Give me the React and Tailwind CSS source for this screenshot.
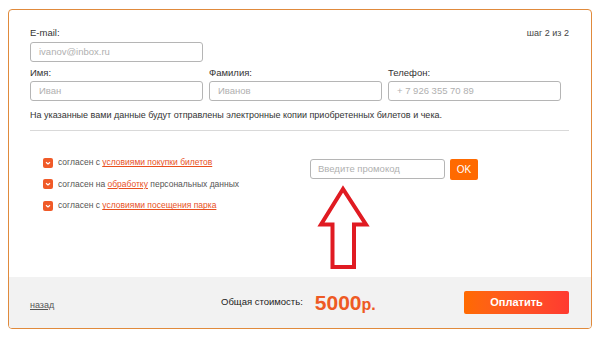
import React from 'react';

const font = { fontFamily: '"Liberation Sans", Arial, sans-serif' };

const CheckMark = () => (
  <svg width="10" height="10" viewBox="0 0 10 10" className="shrink-0">
    <rect x="0" y="0" width="10" height="10" rx="2" fill="#f05a28" />
    <path d="M3 4.2 L5 6 L7 4.2" fill="none" stroke="#fff" strokeWidth="1.2" />
  </svg>
);

const Field = ({ label, placeholder }) => (
  <div className="flex flex-col w-[173px]">
    <div className="text-[9.5px] leading-[12px] text-[#333]">{label}</div>
    <div className="mt-[2px] h-[20px] border border-[#b5b5b5] rounded-[3px] flex items-center pl-[8px] text-[9.5px] text-[#b0b0b0]">
      {placeholder}
    </div>
  </div>
);

const Agree = ({ pre, link, post }) => (
  <div className="h-[21.5px] flex items-center gap-[5px] text-[8.5px] text-[#555]">
    <CheckMark />
    <span>
      {pre} <span className="text-[#e8501e] underline">{link}</span>
      {post && ' ' + post}
    </span>
  </div>
);

export default function App() {
  return (
    <div className="w-[600px] h-[340px] bg-white pt-[9px] pl-[8px]" style={font}>
      <div className="w-[584px] h-[320px] border border-[#e08a3c] rounded-[4px] overflow-hidden flex flex-col">
        {/* contact fields */}
        <div className="pl-[21px] pr-[22px] pt-[17px]">
          <div className="flex justify-between items-center">
            <div className="text-[9.5px] leading-[12px] text-[#333]">E-mail:</div>
            <div className="text-[9px] leading-[12px] text-[#444]">шаг 2 из 2</div>
          </div>
          <div className="mt-[3px] w-[173px] h-[20px] border border-[#b5b5b5] rounded-[3px] flex items-center pl-[8px] text-[9.5px] text-[#b0b0b0]">
            ivanov@inbox.ru
          </div>
          <div className="mt-[5px] flex gap-[6px]">
            <Field label="Имя:" placeholder="Иван" />
            <Field label="Фамилия:" placeholder="Иванов" />
            <Field label="Телефон:" placeholder="+ 7 926 355 70 89" />
          </div>
          <p className="mt-[8px] text-[9px] leading-[12px] text-[#333]">
            На указанные вами данные будут отправлены электронные копии приобретенных билетов и чека.
          </p>
          <div className="mt-[9px] h-px bg-[#d9d9d9]" />
        </div>

        {/* agreements + promo */}
        <div className="flex-1 flex pl-[21px]">
          <div className="w-[280px] pl-[13px] pt-[21px] flex flex-col">
            <Agree pre="согласен с" link="условиями покупки билетов" />
            <Agree pre="согласен на" link="обработку" post="персональных данных" />
            <Agree pre="согласен с" link="условиями посещения парка" />
          </div>
          <div className="pt-[28px] flex flex-col">
            <div className="flex items-start gap-[5px]">
              <div className="w-[135px] h-[20px] border border-[#b5b5b5] rounded-[3px] flex items-center pl-[7px] text-[9.5px] text-[#b0b0b0]">
                Введите промокод
              </div>
              <button className="w-[28px] h-[21px] bg-[#ff6a00] rounded-[2px] text-white text-[10px] leading-none">
                OK
              </button>
            </div>
            <svg width="60" height="92" viewBox="0 0 60 92" className="block">
              <polygon
                points="33,9 11,44.5 22.5,44.5 22.5,87 44,87 44,44.5 56,44.5"
                fill="none"
                stroke="#e01b22"
                strokeWidth="4"
                strokeLinejoin="miter"
              />
            </svg>
          </div>
        </div>

        {/* footer */}
        <div className="h-[51px] bg-[#f2f2f2] flex items-center pl-[21px] pr-[22px]">
          <div className="w-[191px]">
            <a className="text-[9px] text-[#555] underline">назад</a>
          </div>
          <div className="text-[9.5px] text-[#222]">Общая стоимость:</div>
          <div className="ml-[12px] text-[#ee5a24] font-bold leading-none flex items-baseline">
            <span className="text-[21px]">5000</span>
            <span className="text-[16px]">р.</span>
          </div>
          <button className="ml-auto w-[105px] h-[23px] rounded-[2px] bg-linear-to-r from-[#ff6a00] to-[#ff3a30] text-white text-[11px] font-bold">
            Оплатить
          </button>
        </div>
      </div>
    </div>
  );
}
